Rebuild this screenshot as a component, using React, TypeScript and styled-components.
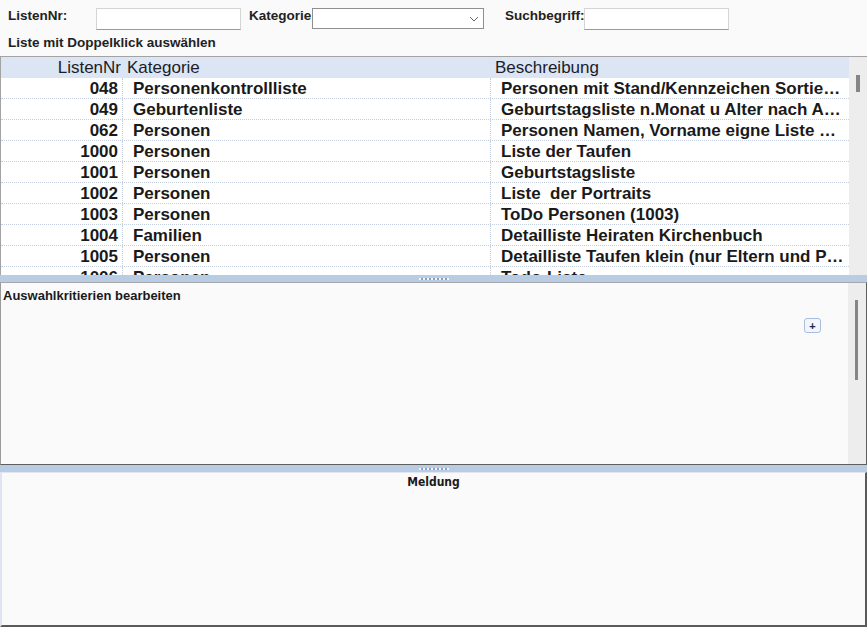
import React from 'react';
import styled, { createGlobalStyle } from 'styled-components';

const rows = [
  { nr: '048', kategorie: 'Personenkontrollliste', text: 'Personen mit Stand/Kennzeichen Sortiert nach Stand' },
  { nr: '049', kategorie: 'Geburtenliste', text: 'Geburtstagsliste n.Monat u Alter nach Alter sortiert' },
  { nr: '062', kategorie: 'Personen', text: 'Personen Namen, Vorname eigne Liste Nr. 62' },
  { nr: '1000', kategorie: 'Personen', text: 'Liste der Taufen' },
  { nr: '1001', kategorie: 'Personen', text: 'Geburtstagsliste' },
  { nr: '1002', kategorie: 'Personen', text: 'Liste  der Portraits' },
  { nr: '1003', kategorie: 'Personen', text: 'ToDo Personen (1003)' },
  { nr: '1004', kategorie: 'Familien', text: 'Detailliste Heiraten Kirchenbuch' },
  { nr: '1005', kategorie: 'Personen', text: 'Detailliste Taufen klein (nur Eltern und Paten)' },
  { nr: '1006', kategorie: 'Personen', text: 'Todo-Liste' },
];

const GlobalStyle = createGlobalStyle`
  html, body {
    margin: 0;
    padding: 0;
    background: #fafafa;
  }
  body {
    font-family: "Liberation Sans", Arial, sans-serif;
    color: #1a1a1a;
  }
`;

const App: React.FC = () => {
  return (
    <Page>
      <GlobalStyle />
      <FilterBar>
        <Label width={88}>ListenNr:</Label>
        <TextField width={145} />
        <Label width={63} gap={8}>Kategorie</Label>
        <SelectBox>
          <svg width='10' height='6' viewBox='0 0 10 6'>
            <path d='M1 1 L5 5 L9 1' fill='none' stroke='#666' strokeWidth='1' />
          </svg>
        </SelectBox>
        <Label width={79} gap={21}>Suchbegriff:</Label>
        <TextField width={145} />
      </FilterBar>
      <Hint>Liste mit Doppelklick auswählen</Hint>

      <TableFrame>
        <TableBody>
          <HeaderRow>
            <HeadCell align='right'>ListenNr</HeadCell>
            <HeadCell>Kategorie</HeadCell>
            <HeadCell>Beschreibung</HeadCell>
          </HeaderRow>
          {rows.map((row) => (
            <Row key={row.nr}>
              <Cell align='right'>{row.nr}</Cell>
              <Cell>{row.kategorie}</Cell>
              <Cell last>{row.text}</Cell>
            </Row>
          ))}
        </TableBody>
        <ScrollTrack>
          <Thumb top={18} height={17} />
        </ScrollTrack>
      </TableFrame>

      <Splitter>
        <Grip />
      </Splitter>

      <CriteriaPanel>
        <CriteriaContent>
          <PanelTitle>Auswahlkritierien bearbeiten</PanelTitle>
          <AddButton>+</AddButton>
        </CriteriaContent>
        <ScrollTrack>
          <Thumb top={17} height={80} narrow />
        </ScrollTrack>
      </CriteriaPanel>

      <Splitter>
        <Grip />
      </Splitter>

      <MessagePanel>
        <MessageTitle>Meldung</MessageTitle>
      </MessagePanel>
    </Page>
  );
};

const Page = styled.div`
  height: 627px;
  display: flex;
  flex-direction: column;
  background: #fafafa;
  overflow: hidden;
`;

const FilterBar = styled.div`
  display: flex;
  align-items: flex-start;
  height: 34px;
  padding: 8px 0 0 8px;
  box-sizing: border-box;
`;

const Label = styled.div<{ width: number; gap?: number }>`
  width: ${(p) => p.width}px;
  margin-left: ${(p) => p.gap ?? 0}px;
  font-size: 13.5px;
  font-weight: bold;
  line-height: 15px;
  white-space: nowrap;
  color: #222;
`;

const TextField = styled.div<{ width: number }>`
  width: ${(p) => p.width}px;
  height: 22px;
  box-sizing: border-box;
  background: #fff;
  border: 1px solid #d4d4d4;
  border-bottom-color: #9a9a9a;
`;

const SelectBox = styled.div`
  width: 172px;
  height: 21px;
  box-sizing: border-box;
  background: #fff;
  border: 1px solid #8f8f8f;
  display: flex;
  align-items: center;
  justify-content: flex-end;
  padding-right: 4px;
`;

const Hint = styled.div`
  height: 22px;
  padding-left: 8px;
  font-size: 13.5px;
  font-weight: bold;
  line-height: 18px;
  color: #222;
`;

const TableFrame = styled.div`
  height: 219px;
  display: flex;
  border-top: 1px solid #a3a3a3;
  border-left: 1px solid #a3a3a3;
  box-sizing: border-box;
  overflow: hidden;
  background: #fff;
`;

const TableBody = styled.div`
  flex: 1;
  overflow: hidden;
`;

const columns = '122px 368px 1fr';

const HeaderRow = styled.div`
  display: grid;
  grid-template-columns: ${columns};
  height: 21px;
  background: #dbe5f3;
`;

const HeadCell = styled.div<{ align?: 'right' }>`
  font-size: 17px;
  line-height: 21px;
  text-align: ${(p) => p.align ?? 'left'};
  padding: ${(p) => (p.align ? '0 2px 0 0' : '0 0 0 4px')};
  white-space: nowrap;
  color: #1c1c2a;
`;

const Row = styled.div`
  display: grid;
  grid-template-columns: ${columns};
  height: 21px;
  box-sizing: border-box;
  border-bottom: 1px dotted #c3cee0;
  background: #fff;
`;

const Cell = styled.div<{ align?: 'right'; last?: boolean }>`
  font-size: 17px;
  font-weight: bold;
  line-height: 21px;
  text-align: ${(p) => p.align ?? 'left'};
  padding: ${(p) => (p.align ? '0 4px 0 0' : '0 4px 0 10px')};
  border-right: ${(p) => (p.last ? 'none' : '1px dotted #c3cee0')};
  white-space: pre;
  overflow: hidden;
  text-overflow: ellipsis;
  color: #1a1a1a;
`;

const ScrollTrack = styled.div`
  position: relative;
  width: 18px;
  flex-shrink: 0;
  background: #ededed;
`;

const Thumb = styled.div<{ top: number; height: number; narrow?: boolean }>`
  position: absolute;
  left: 7px;
  top: ${(p) => p.top}px;
  width: ${(p) => (p.narrow ? 3 : 4)}px;
  height: ${(p) => p.height}px;
  background: #858585;
`;

const Splitter = styled.div`
  height: 7px;
  background: #b8cce4;
  display: flex;
  align-items: center;
  justify-content: center;
  flex-shrink: 0;
`;

const Grip = styled.div`
  width: 30px;
  height: 2px;
  background: repeating-linear-gradient(90deg, #f4f7fb 0 2px, #8aa0c0 2px 4px);
`;

const CriteriaPanel = styled.div`
  height: 183px;
  display: flex;
  box-sizing: border-box;
  border-top: 1px solid #a8a8a8;
  border-left: 1px solid #9a9a9a;
  border-bottom: 1px solid #5e5e5e;
  border-right: 1px solid #5e5e5e;
  background: #fafafa;
`;

const CriteriaContent = styled.div`
  position: relative;
  flex: 1;
  padding: 6px 2px;
`;

const PanelTitle = styled.div`
  font-size: 13px;
  font-weight: bold;
  line-height: 13px;
  color: #1a1a1a;
`;

const AddButton = styled.button`
  position: absolute;
  right: 27px;
  top: 35px;
  width: 17px;
  height: 15px;
  padding: 0;
  border: 1px solid #a9bde0;
  border-radius: 3px;
  background: #f2f5fb;
  font-family: "Liberation Sans", Arial, sans-serif;
  font-size: 11px;
  font-weight: bold;
  line-height: 12px;
  color: #1a2a44;
`;

const MessagePanel = styled.div`
  flex: 1;
  box-sizing: border-box;
  border-top: 1px solid #e2e4ee;
  border-left: 2px solid #e0e4f2;
  border-right: 2px solid #5a5a5a;
  border-bottom: 2px solid #5a5a5a;
  background: #fafafa;
`;

const MessageTitle = styled.div`
  text-align: center;
  font-family: "DejaVu Sans Condensed", "Liberation Sans", sans-serif;
  font-size: 12px;
  font-weight: bold;
  line-height: 16px;
  padding-top: 1px;
  color: #1a1a1a;
`;

export default App;
